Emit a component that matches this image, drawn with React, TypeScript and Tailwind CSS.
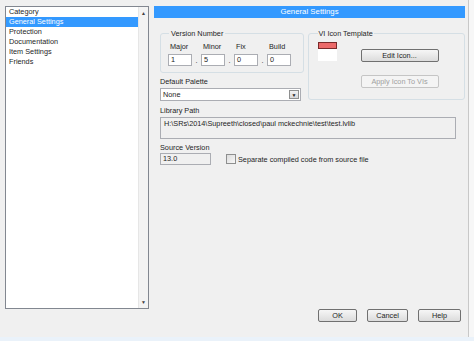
import React from "react";

const font = { fontFamily: '"Liberation Sans", Arial, sans-serif' };

const categories = [
  "Category",
  "General Settings",
  "Protection",
  "Documentation",
  "Item Settings",
  "Friends",
];

function WinButton({
  label,
  width,
  disabled,
}: {
  label: string;
  width: string;
  disabled?: boolean;
}) {
  return (
    <button
      className={`${width} h-[13px] rounded-[2px] border text-[7.3px] leading-[11px] bg-gradient-to-b ${
        disabled
          ? "border-[#c5c5c5] from-[#f4f4f4] to-[#f4f4f4] text-[#a0a0a0]"
          : "border-[#707070] from-[#f6f6f6] to-[#dcdcdc] text-[#1e1e1e]"
      }`}
    >
      {label}
    </button>
  );
}

function Field({ value, width }: { value: string; width: string }) {
  return (
    <div
      className={`${width} h-[12px] border border-[#abadb3] bg-white pl-[2px] text-[7.3px] leading-[10px]`}
    >
      {value}
    </div>
  );
}

export default function App() {
  return (
    <div
      className="w-[474px] h-[341px] bg-[#f0f0f0] flex flex-col text-[#1e1e1e] overflow-hidden"
      style={font}
    >
      <div className="flex flex-1">
        <div className="flex flex-1 pl-[5px] pt-[6px]">
          {/* Category list */}
          <div className="w-[144px] h-[303px] border border-[#828790] bg-white flex">
            <div className="flex-1 flex flex-col text-[7.3px] leading-[10px]">
              {categories.map((c, i) => (
                <div
                  key={c}
                  className={`h-[10px] pl-[3px] ${
                    i === 1 ? "bg-[#3399ff] text-white" : ""
                  }`}
                >
                  {c}
                </div>
              ))}
            </div>
            <div className="w-[10px] border-l border-[#e6e6e6] bg-[#f3f3f3] flex flex-col justify-between items-center py-[3px] text-[5px] leading-[6px] text-[#404040]">
              <span>▲</span>
              <span>▼</span>
            </div>
          </div>

          {/* Settings panel */}
          <div className="ml-[5px] w-[311px] flex flex-col">
            <div className="h-[12px] bg-[#3399ff] text-white text-[7.8px] leading-[12px] text-center">
              General Settings
            </div>

            <div className="flex mt-[11px] pl-[6px]">
              <div className="flex flex-col w-[144px]">
                <fieldset className="h-[44px] border border-[#d5dfe5] rounded-[3px] pl-[7px]">
                  <legend className="ml-[1px] px-[2px] text-[7.3px] leading-[9px]">
                    Version Number
                  </legend>
                  <div className="flex items-end mt-[4px] text-[7.3px] leading-[9px]">
                    {[
                      ["Major", "1"],
                      ["Minor", "5"],
                      ["Fix", "0"],
                      ["Build", "0"],
                    ].map(([label, v], i) => (
                      <div key={label} className="flex items-end">
                        {i > 0 && (
                          <span className="w-[9px] text-center leading-[9px] mb-[1px]">
                            .
                          </span>
                        )}
                        <div className="flex flex-col">
                          <span className="pl-[2px] mb-[3px]">{label}</span>
                          <Field value={v} width="w-[24px]" />
                        </div>
                      </div>
                    ))}
                  </div>
                </fieldset>
                <div className="mt-[4px] text-[7.3px] leading-[9px]">
                  Default Palette
                </div>
                <div className="mt-[2px] w-[141px] h-[13px] border border-[#abadb3] bg-white flex items-center text-[7.3px] leading-[10px] pl-[2px]">
                  <span className="flex-1">None</span>
                  <span className="w-[10px] h-[9px] mr-[1px] border border-[#8e8f8f] bg-gradient-to-b from-[#f2f2f2] to-[#d8d8d8] flex items-center justify-center text-[5px] leading-[6px]">
                    ▼
                  </span>
                </div>
              </div>

              <fieldset className="ml-[4px] w-[158px] h-[71px] border border-[#d5dfe5] rounded-[3px] pl-[9px]">
                <legend className="px-[1px] text-[7.3px] leading-[9px]">
                  VI Icon Template
                </legend>
                <div className="flex">
                  <div className="flex flex-col mt-[4px]">
                    <div className="w-[19px] h-[7px] bg-[#ec6a6a] border border-[#7a2a2a]" />
                    <div className="w-[19px] h-[12px] bg-white" />
                  </div>
                  <div className="ml-[24px] mt-[11px] flex flex-col gap-[13px]">
                    <WinButton label="Edit Icon..." width="w-[78px]" />
                    <WinButton label="Apply Icon To VIs" width="w-[78px]" disabled />
                  </div>
                </div>
              </fieldset>
            </div>

            <div className="pl-[6px] mt-[5px] text-[7.3px] leading-[9px]">
              <div>Library Path</div>
              <div className="mt-[2px] w-[296px] h-[22px] border border-[#abadb3] bg-[#f0f0f0] pl-[3px] pt-[1px] leading-[10px]">
                H:\SRs\2014\Supreeth\closed\paul mckechnie\test\test.lvlib
              </div>
              <div className="mt-[4px]">Source Version</div>
              <div className="mt-[1px] flex items-center">
                <div className="w-[51px] h-[12px] border border-[#abadb3] bg-[#f0f0f0] pl-[2px] leading-[10px]">
                  13.0
                </div>
                <div className="ml-[15px] w-[10px] h-[10px] border border-[#8e8f8f] bg-gradient-to-br from-[#dcdcdc] to-[#f8f8f8]" />
                <span className="ml-[2px]">
                  Separate compiled code from source file
                </span>
              </div>
            </div>

            <div className="mt-auto mb-[15px] flex justify-end gap-[10px] pr-[4px]">
              <WinButton label="OK" width="w-[39px]" />
              <WinButton label="Cancel" width="w-[41px]" />
              <WinButton label="Help" width="w-[43px]" />
            </div>
          </div>
        </div>
        <div className="w-[6px] border-l border-[#c8c8c8] bg-[#f7f7f7]" />
      </div>
      <div className="h-[4px] bg-[#eaf2fa]" />
    </div>
  );
}
